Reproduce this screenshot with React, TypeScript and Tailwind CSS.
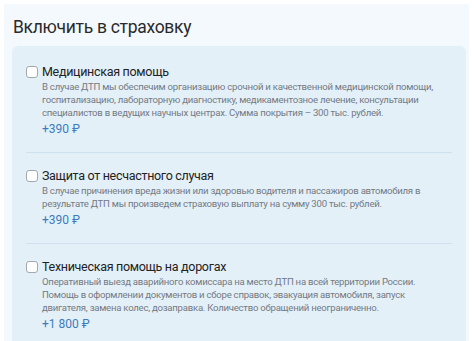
import React from 'react';

interface Option {
  title: string;
  lines: string[];
  price: string;
}

const options: Option[] = [
  {
    title: 'Медицинская помощь',
    lines: [
      'В случае ДТП мы обеспечим организацию срочной и качественной медицинской помощи,',
      'госпитализацию, лабораторную диагностику, медикаментозное лечение, консультации',
      'специалистов в ведущих научных центрах. Сумма покрытия – 300 тыс. рублей.',
    ],
    price: '+390 ₽',
  },
  {
    title: 'Защита от несчастного случая',
    lines: [
      'В случае причинения вреда жизни или здоровью водителя и пассажиров автомобиля в',
      'результате ДТП мы произведем страховую выплату на сумму 300 тыс. рублей.',
    ],
    price: '+390 ₽',
  },
  {
    title: 'Техническая помощь на дорогах',
    lines: [
      'Оперативный выезд аварийного комиссара на место ДТП на всей территории России.',
      'Помощь в оформлении документов и сборе справок, эвакуация автомобиля, запуск',
      'двигателя, замена колес, дозаправка. Количество обращений неограниченно.',
    ],
    price: '+1 800 ₽',
  },
];

const OptionRow: React.FC<{ option: Option; first: boolean }> = ({ option, first }) => (
  <div className={`${first ? 'pt-[18px]' : 'pt-[15px] border-t border-[#cfe1ef]'} pb-[15px]`}>
    <label className="flex items-start gap-1 cursor-pointer">
      <span className="mt-[2px] h-3 w-3 shrink-0 rounded-[3px] border border-[#a3a9b1] bg-white" />
      <div className="min-w-0">
        <div className="text-[12.5px] leading-4 tracking-[-0.3px] text-[#222]">{option.title}</div>
        <p className="whitespace-nowrap text-[9.6px] leading-[13px] tracking-[-0.25px] text-[#737a84]">
          {option.lines.map((line, i) => (
            <React.Fragment key={i}>
              {line}
              {i < option.lines.length - 1 && <br />}
            </React.Fragment>
          ))}
        </p>
        <div className="mt-[2px] text-[12px] leading-4 text-[#3b7bbd]">{option.price}</div>
      </div>
    </label>
  </div>
);

export default function App() {
  return (
    <div
      className="min-h-[341px] bg-white pl-1 pr-[7px] pt-1"
      style={{ fontFamily: 'Roboto, "Noto Sans", sans-serif' }}
    >
      <div className="flex min-h-[337px] flex-col bg-[#f3f9fd] pl-2 pr-[3px]">
        <h2 className="pl-[1px] pt-[13px] pb-[9px] text-[17.5px] leading-5 tracking-[-0.3px] text-[#2a2a2a]">
          Включить в страховку
        </h2>
        <div className="flex-1 rounded-t-md bg-[#e4f0f8] px-[14px]">
          {options.map((o, i) => (
            <OptionRow key={o.title} option={o} first={i === 0} />
          ))}
        </div>
      </div>
    </div>
  );
}
